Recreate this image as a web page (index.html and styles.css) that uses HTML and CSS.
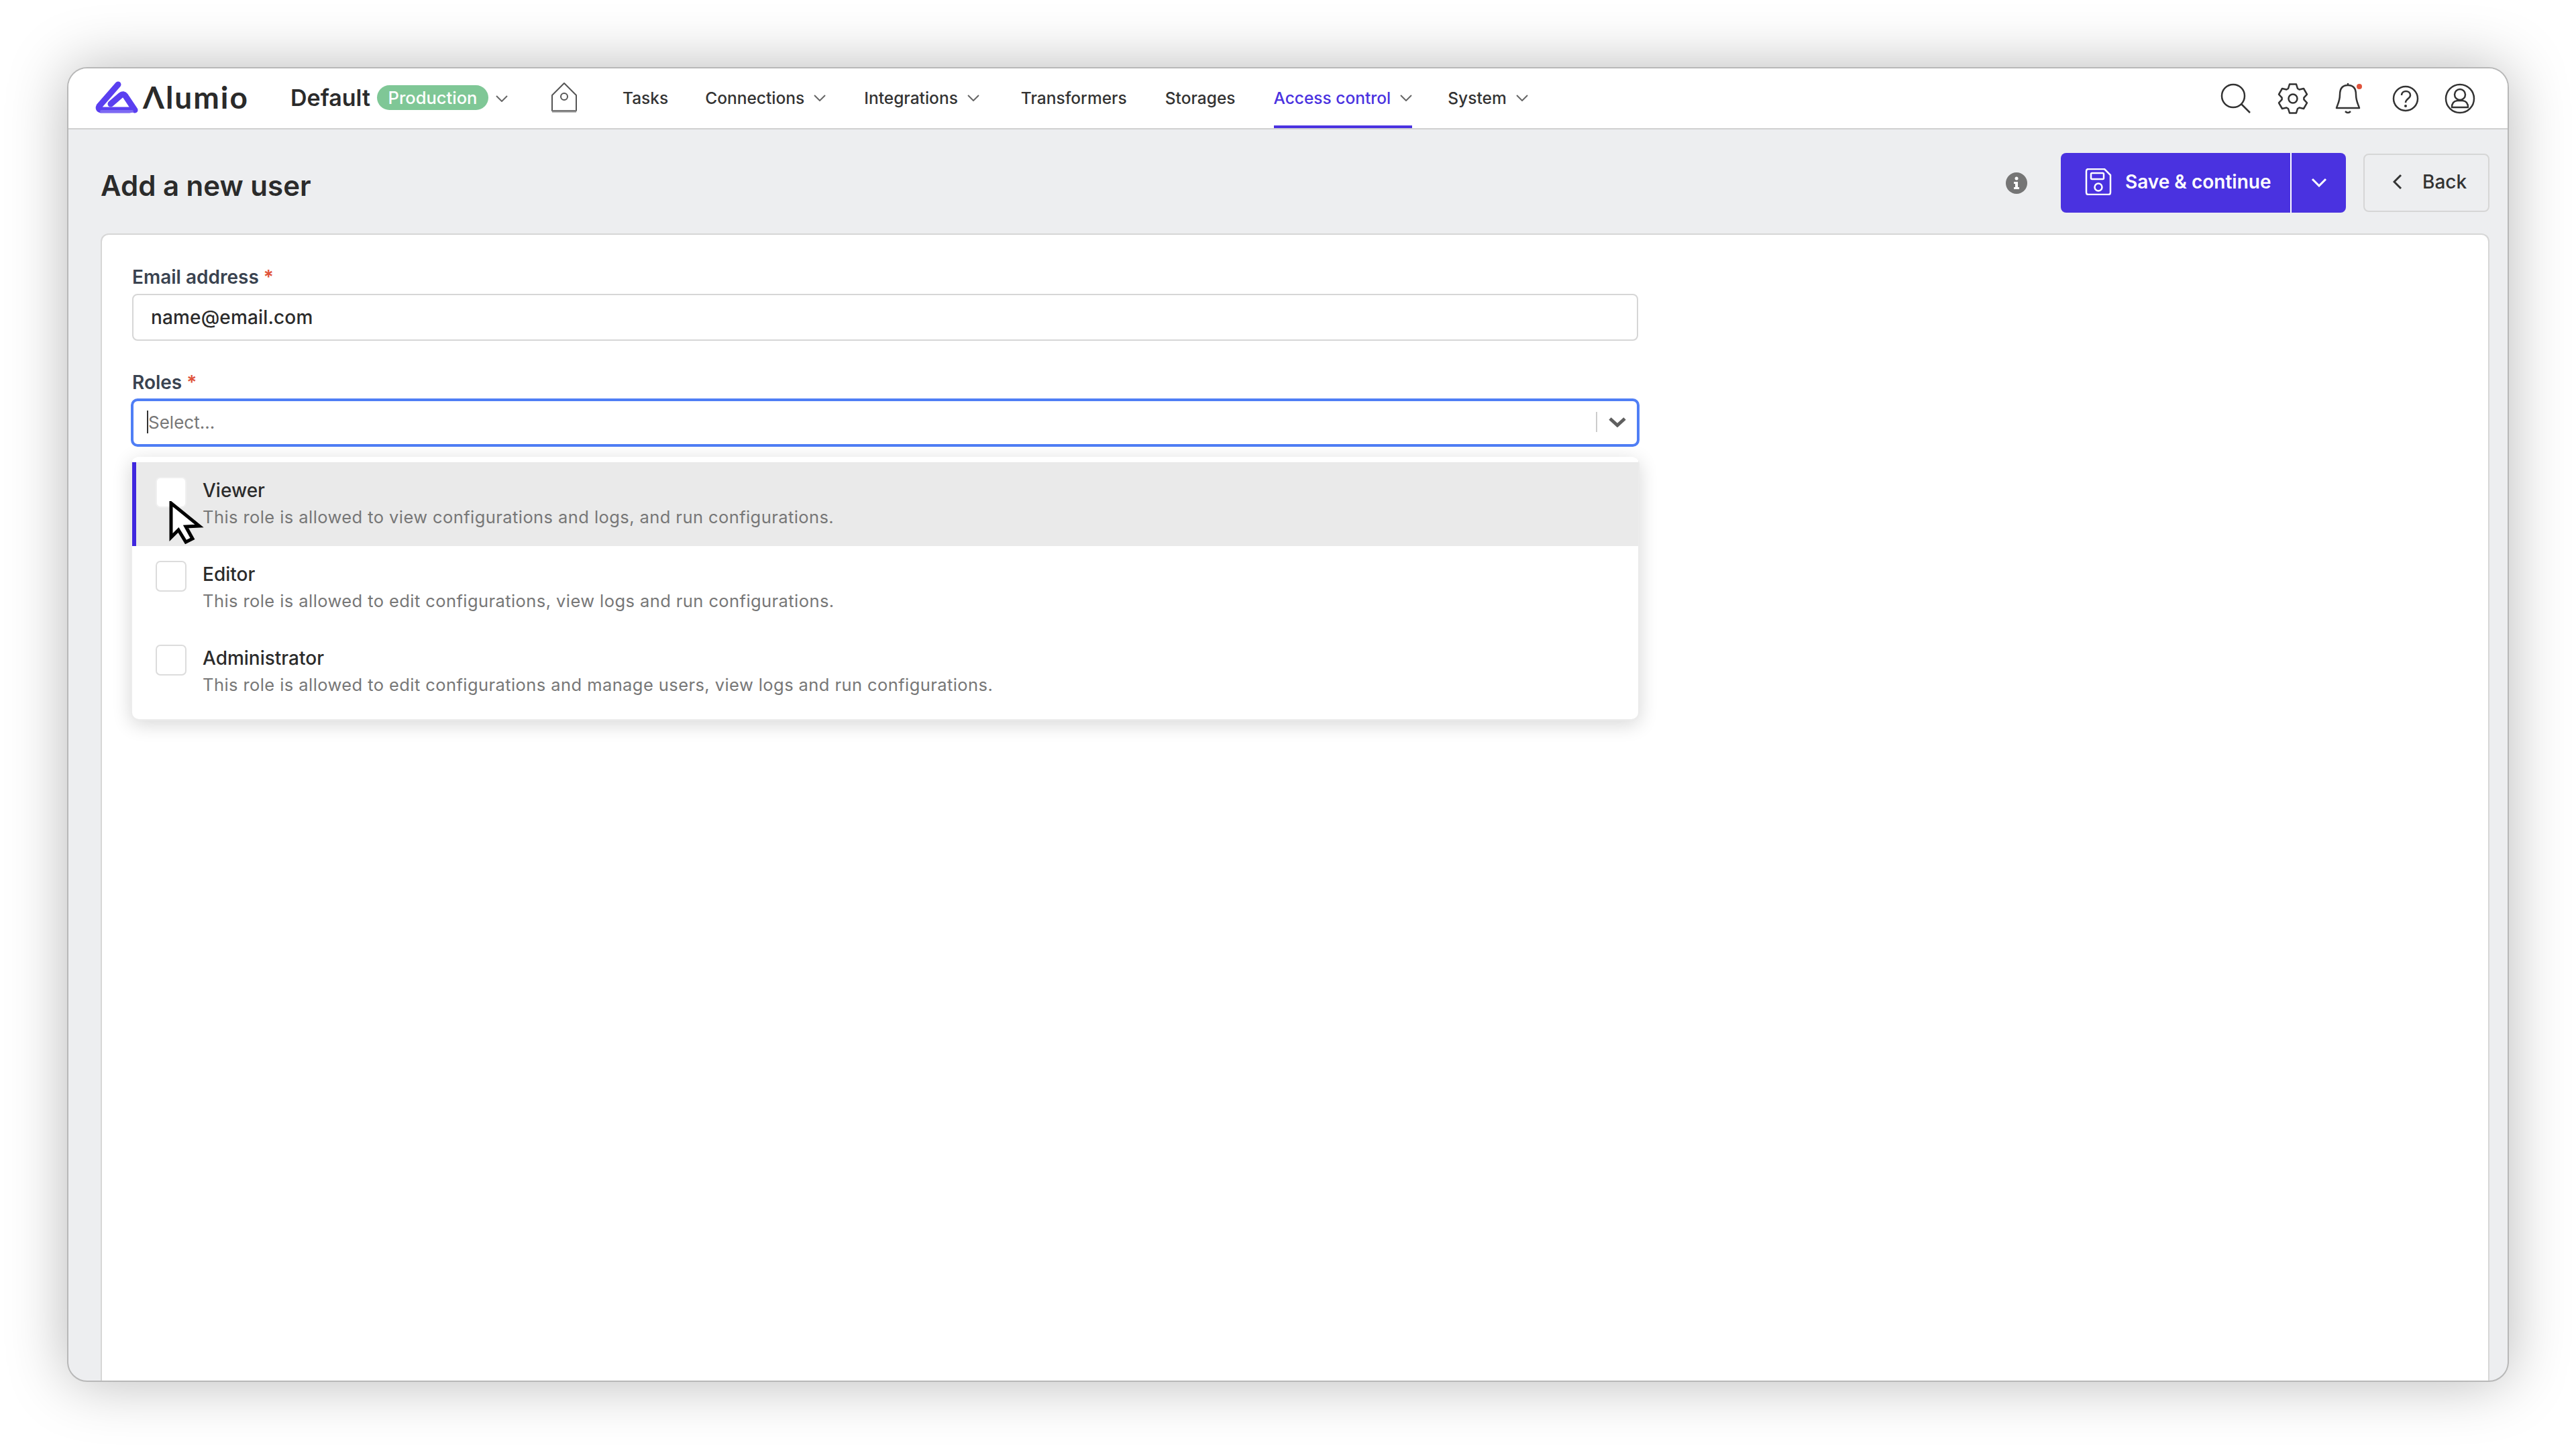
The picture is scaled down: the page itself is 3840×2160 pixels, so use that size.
FILE: index.html
```html
<!DOCTYPE html>
<html lang="en">
<head>
<meta charset="utf-8">
<title>Add a new user</title>
<link rel="stylesheet" href="styles.css">
</head>
<body>
<div class="window">
  <header class="topbar">
    <svg class="logo-mark" width="70" height="50" viewBox="0 0 70 50" fill="none" stroke-linecap="round"><path d="M35 6 L7 38 Q4 44 12 44 L52 44" stroke="#5a3ff0" stroke-width="9"/><path d="M24 35 L39 22 Q43 19 46 23 L60 44" stroke="#5a3ff0" stroke-width="9"/><path d="M10 46 H56" stroke="#7d69f3" stroke-width="4"/></svg>
    <span class="logo-text">Λlumio</span>
    <span class="project">Default</span>
    <span class="pill">Production</span>
    <svg class="chev pill-chev" width="18" height="10" viewBox="0 0 18 10"><path d="M1 1 L9 9 L17 1"/></svg>
    <svg class="home" width="40" height="46" viewBox="0 0 40 46" fill="none" stroke="#555" stroke-width="2"><path d="M20 2 L38 20 V43 H2 V20 Z" stroke-linejoin="round"/><circle cx="20" cy="22" r="5"/><path d="M2 44 H38" stroke="#888" stroke-width="3"/></svg>
    <nav class="nav">
      <a class="nav-item tight">Tasks</a>
      <a class="nav-item">Connections<svg class="chev" width="18" height="10" viewBox="0 0 18 10"><path d="M1 1 L9 9 L17 1"/></svg></a>
      <a class="nav-item wide">Integrations<svg class="chev" width="18" height="10" viewBox="0 0 18 10"><path d="M1 1 L9 9 L17 1"/></svg></a>
      <a class="nav-item">Transformers</a>
      <a class="nav-item">Storages</a>
      <a class="nav-item active">Access control<svg class="chev" width="18" height="10" viewBox="0 0 18 10"><path d="M1 1 L9 9 L17 1"/></svg></a>
      <a class="nav-item">System<svg class="chev" width="18" height="10" viewBox="0 0 18 10"><path d="M1 1 L9 9 L17 1"/></svg></a>
    </nav>
    <div class="tools">
      <svg class="tool" width="46" height="46" viewBox="0 0 46 46"><circle cx="19" cy="19" r="17"/><path d="M31 31 L44 44"/></svg>
      <svg class="tool" width="48" height="48" viewBox="0 0 48 48"><path stroke-linejoin="round" d="M17 9 L19 2.6 H29 L31 9 L33.5 10.5 L40 9 L45 17.6 L40.4 22.6 V25.4 L45 30.4 L40 39 L33.5 37.5 L31 39 L29 45.4 H19 L17 39 L14.5 37.5 L8 39 L3 30.4 L7.6 25.4 V22.6 L3 17.6 L8 9 L14.5 10.5 Z"/><circle cx="24" cy="24" r="6.5"/></svg>
      <svg class="tool" width="48" height="48" viewBox="0 0 48 48"><path stroke-linejoin="round" d="M20 4 V1 M20 4 C10 4 8 12 8 18 C8 28 4 34 3 38 H37 C36 34 32 28 32 18 C32 12 30 4 20 4 Z M16 43 Q20 47 24 43"/><circle class="dot" cx="37" cy="6" r="4"/></svg>
      <svg class="tool" width="40" height="40" viewBox="0 0 40 40"><circle cx="20" cy="20" r="18"/><path d="M14 15 C14 7 27 7 27 15 C27 20 20 20 20 26"/><circle class="fill" cx="20" cy="31" r="2"/></svg>
      <svg class="tool" width="46" height="46" viewBox="0 0 46 46"><circle cx="23" cy="23" r="21"/><circle cx="23" cy="17" r="8"/><path stroke-linejoin="round" d="M11 36 Q11 27 19 26 H27 Q35 27 35 36 Z"/></svg>
    </div>
  </header>
  <main class="main">
    <div class="pagehead">
      <h1 class="title">Add a new user</h1>
      <svg class="info" width="32" height="32" viewBox="0 0 32 32"><circle cx="16" cy="16" r="16" fill="#757575"/><circle cx="16" cy="9" r="2.5" fill="#fff"/><path d="M12 14 H18 V22 H20 V25 H12 V22 H14 V17 H12 Z" fill="#fff"/></svg>
      <div class="split">
        <button class="btn-save">
          <svg width="40" height="40" viewBox="0 0 40 40" fill="none" stroke="#fff" stroke-width="2.5"><path stroke-linejoin="round" d="M5 1 H29 L38 10 V36 Q38 39 35 39 H5 Q2 39 2 36 V4 Q2 1 5 1 Z"/><rect x="9" y="7" width="19" height="9" rx="1.5"/><circle cx="20" cy="28" r="5.5"/></svg>
          <span>Save &amp; continue</span>
        </button>
        <button class="btn-more"><svg width="24" height="14" viewBox="0 0 24 14" fill="none" stroke="#fff" stroke-width="3"><path d="M2 2 L12 12 L22 2"/></svg></button>
      </div>
      <button class="btn-back"><svg width="14" height="24" viewBox="0 0 14 24" fill="none" stroke="#333" stroke-width="3"><path d="M12 2 L2 12 L12 22"/></svg><span>Back</span></button>
    </div>
    <section class="card">
      <div class="form">
        <label class="label">Email address <span class="req">*</span></label>
        <div class="input">name@email.com</div>
        <label class="label roles-label">Roles <span class="req">*</span></label>
        <div class="select">
          <span class="caret"></span><span class="placeholder">Select...</span>
          <span class="sep"></span>
          <svg width="26" height="16" viewBox="0 0 26 16" fill="none" stroke="#5f5f5f" stroke-width="5"><path d="M2 3 L13 13 L24 3"/></svg>
        </div>
        <div class="menu">
          <div class="option hover">
            <span class="check"></span>
            <div><div class="opt-title">Viewer</div><div class="opt-desc">This role is allowed to view configurations and logs, and run configurations.</div></div>
          </div>
          <div class="option">
            <span class="check"></span>
            <div><div class="opt-title">Editor</div><div class="opt-desc">This role is allowed to edit configurations, view logs and run configurations.</div></div>
          </div>
          <div class="option">
            <span class="check"></span>
            <div><div class="opt-title">Administrator</div><div class="opt-desc">This role is allowed to edit configurations and manage users, view logs and run configurations.</div></div>
          </div>
        </div>
      </div>
    </section>
  </main>
  <svg class="pointer" width="52" height="64" viewBox="0 0 52 64"><path d="M3 3 V54 L14 43 L25 61 L35 56 L25 38 L45 37 Z" fill="#fff" stroke="#000" stroke-width="5"/></svg>
</div>
</body>
</html>
```
FILE: styles.css
```css
* { box-sizing: border-box; }
html, body { margin: 0; height: 2160px; overflow: hidden; background: #fff; }
body { padding: 100px; font-family: Inter, "Noto Sans", sans-serif; color: #2b2b2b; }
.window { position: relative; width: 3640px; height: 1960px; border: 2px solid #b8b8b8; border-radius: 30px; background: #edeef0; box-shadow: 0 0 90px rgba(0,0,0,.28); overflow: hidden; display: flex; flex-direction: column; }

.topbar { height: 91px; flex: none; display: flex; align-items: center; background: #fff; border-bottom: 2px solid #d0d0d0; padding-left: 39px; }
.logo-mark { flex: none; margin-top: -4px; }
.logo-text { font-family: Lato, sans-serif; font-weight: 700; font-size: 46px; letter-spacing: 2px; color: #2a2a2a; margin-left: 2px; width: 150px; margin-top: -4px; white-space: nowrap; }
.project { font-size: 34px; font-weight: 600; margin-left: 70px; margin-top: -2px; }
.pill { margin-left: 10px; height: 37px; width: 166px; border-radius: 19px; background: #7fc796; color: #fff; font-size: 25.5px; font-weight: 500; display: flex; align-items: center; justify-content: center; margin-top: -2px; }
.chev { fill: none; stroke: #666; stroke-width: 2; flex: none; }
.pill-chev { margin-left: 11px; }
.home { margin-left: 64px; flex: none; margin-top: -4px; }
.nav { display: flex; align-self: stretch; margin-left: 67px; font-size: 24.5px; font-weight: 500; }
.nav-item { display: flex; align-items: center; gap: 14px; margin-right: 57px; color: #333; border-bottom: 4px solid transparent; white-space: nowrap; padding-top: 2px; }
.nav-item.tight { margin-right: 55px; }
.nav-item.wide { margin-right: 62px; }
.nav-item.active { color: #4a32e0; border-bottom-color: #4a32e0; margin-right: 53px; }
.tools { margin-left: auto; display: flex; align-items: center; gap: 38px; padding-right: 48px; }
.tool { fill: none; stroke: #333; stroke-width: 2.5; flex: none; }
.tool .dot { fill: #e0533b; stroke: none; }
.tool .fill { fill: #333; stroke: none; }

.main { flex: 1; display: flex; flex-direction: column; padding: 0 27px 0 48px; min-height: 0; }
.pagehead { height: 155px; flex: none; display: flex; align-items: center; padding-top: 4px; }
.title { margin: 8px 0 0; font-size: 42px; font-weight: 600; color: #2b2b2b; flex: 1; }
.info { margin-right: 50px; flex: none; }
.split { display: flex; height: 89px; margin-right: 26px; }
.btn-save, .btn-more { border: none; background: #4a32e0; color: #fff; font: inherit; display: flex; align-items: center; }
.btn-save { width: 344px; border-radius: 8px 0 0 8px; padding: 0 0 3px 36px; gap: 20px; font-size: 28px; font-weight: 600; border-right: 2px solid #fff; }
.btn-more { width: 81px; border-radius: 0 8px 8px 0; justify-content: center; padding-bottom: 2px; }
.btn-back { width: 188px; height: 87px; border: 2px solid #d6d6d6; border-radius: 8px; background: transparent; font: inherit; font-size: 28px; font-weight: 500; color: #333; display: flex; align-items: center; padding: 0 0 3px 42px; gap: 30px; }

.card { flex: 1; background: #fff; border: 2px solid #d6d6d6; border-bottom: none; border-radius: 12px 12px 0 0; padding: 46px 0 0 44px; }
.form { width: 2248px; display: flex; flex-direction: column; }
.label { font-size: 28px; font-weight: 600; color: #3a4350; line-height: 34px; height: 42px; padding-left: 1px; }
.req { color: #e0533b; }
.input { margin-left: 1px; width: 2245px; height: 70px; border: 2px solid #d6d6d6; border-radius: 8px; background: #fff; font-size: 28px; letter-spacing: .15px; display: flex; align-items: center; padding-left: 26px; color: #2b2b2b; font-weight: 500; }
.roles-label { margin-top: 45px; height: 41px; }
.select { height: 72px; width: 2249px; margin-left: -1px; border: 4px solid #4f7ef5; border-radius: 10px; display: flex; align-items: center; padding-left: 20px; padding-right: 16px; padding-bottom: 2px; }
.caret { width: 2px; height: 34px; background: #333; flex: none; }
.placeholder { font-size: 26px; color: #777; flex: 1; }
.sep { width: 2px; height: 30px; background: #ccc; margin-right: 17px; flex: none; }
.menu { margin: 15px 0 0 -1px; background: #fff; border: 2px solid #ececec; border-top-width: 8px; border-top-color: #fff; border-radius: 12px; box-shadow: 0 6px 28px rgba(0,0,0,.16); padding: 0 0 8px; width: 2249px; }
.option { height: 125px; display: flex; padding: 22px 0 0 29px; gap: 24px; border-left: 6px solid transparent; }
.option.hover { background: #eaeaea; border-left-color: #3f27de; }
.check { width: 46px; height: 46px; background: #fff; border: 2px solid #dcdcdc; border-radius: 7px; flex: none; }
.option.hover .check { border-color: #f0f0f0; }
.opt-title { font-size: 28px; line-height: 42px; color: #2b2b2b; margin-top: -1px; font-weight: 500; }
.opt-desc { font-size: 25.5px; letter-spacing: .42px; line-height: 36px; color: #777; white-space: nowrap; margin-top: 1px; }
.pointer { position: absolute; left: 150px; top: 645px; }
```
